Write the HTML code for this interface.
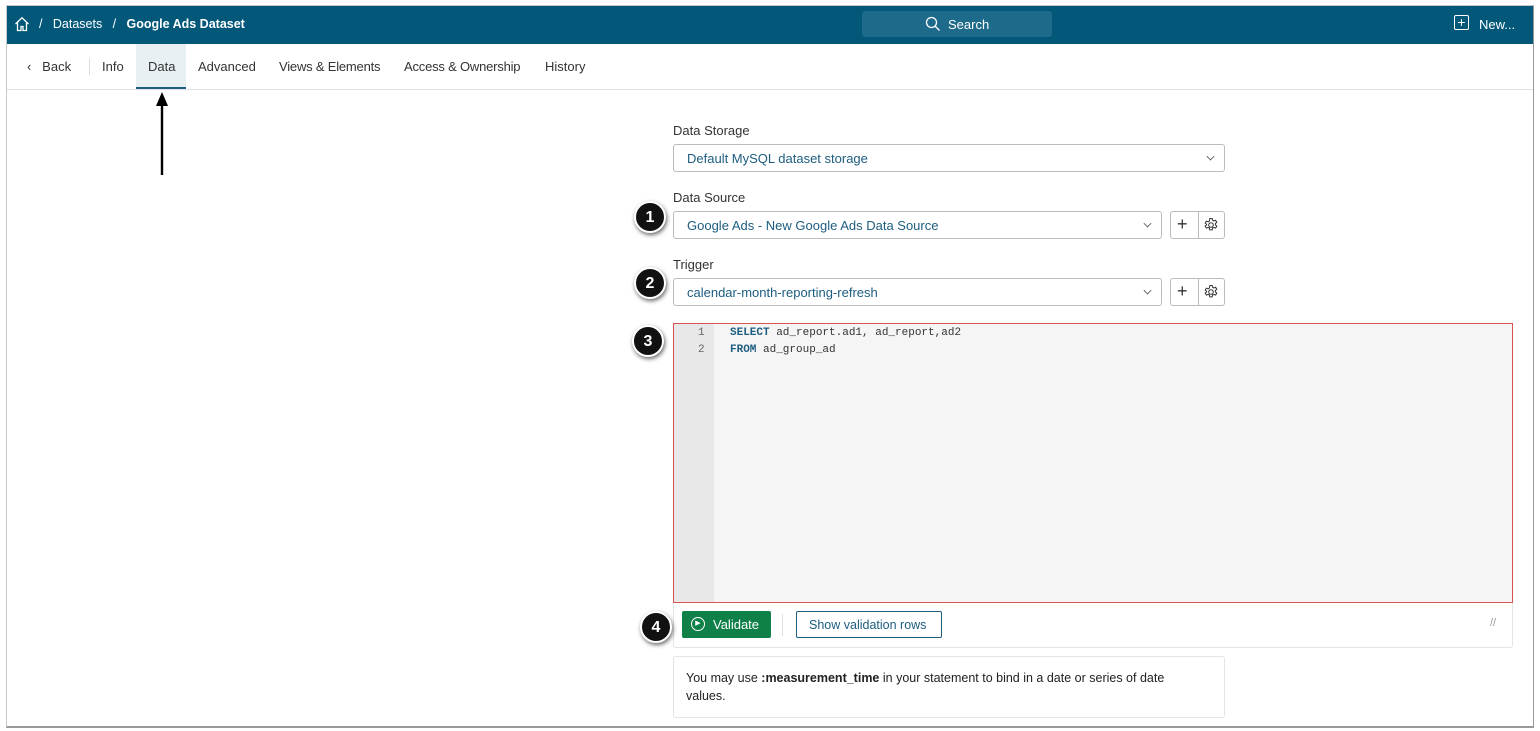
<!DOCTYPE html><html><head><style>
*{box-sizing:border-box;margin:0;padding:0}
body{width:1540px;height:731px;background:#fff;font-family:"Liberation Sans",sans-serif;position:relative;overflow:hidden;font-size:13px;color:#222}
.frame{position:absolute;left:6px;top:5px;width:1528px;height:723px;border:1px solid #c8c8c8;border-right:1px solid #999;border-bottom:2px solid #999}
.hdr{position:absolute;left:7px;top:6px;width:1526px;height:38px;background:#03587a;color:#fff}
.a{position:absolute}
.tab{position:absolute;top:59px;font-size:13px;color:#333}
.lbl{position:absolute;left:673px;font-size:13px;color:#333}
.sel{position:absolute;left:673px;width:489px;height:28px;border:1px solid #bbb;border-radius:3px;color:#1d5d80;font-size:13px;padding:6px 13px}
.chev{position:absolute;right:10px;top:8px;width:7px;height:7px;border-right:1.3px solid #555;border-bottom:1.3px solid #555;transform:rotate(45deg) scale(.8)}
.btns{position:absolute;left:1170px;width:55px;height:28px;border:1px solid #bbb;border-radius:3px}
.btns i{position:absolute;left:27px;top:0;width:1px;height:26px;background:#bbb}
.num{position:absolute;width:32px;height:32px;border-radius:50%;background:#111;color:#fff;font-weight:bold;font-size:16px;text-align:center;line-height:29px;border:2px solid #fff;box-shadow:1px 2px 4px rgba(0,0,0,.6)}
.mono{font-family:"Liberation Mono",monospace;font-size:11px}
</style></head><body>
<div class="frame"></div>
<div class="hdr">
<svg class="a" style="left:7px;top:10px" width="16" height="16" viewBox="0 0 16 16" fill="none" stroke="#fff" stroke-width="1.3"><path d="M1.5 8 8 1.8 14.5 8M3.5 6.5V14.5h3.5v-4h2v4h3.5V6.5"/></svg>
<div class="a" style="left:32px;top:11px;font-size:12.5px">/&nbsp;&nbsp;&nbsp;Datasets&nbsp;&nbsp;&nbsp;/&nbsp;&nbsp;&nbsp;<b>Google Ads Dataset</b></div>
<div class="a" style="left:855px;top:5px;width:190px;height:26px;background:#1d6a8a;border-radius:3px"></div>
<svg class="a" style="left:918px;top:10px" width="16" height="16" viewBox="0 0 16 16" fill="none" stroke="#fff" stroke-width="1.3"><circle cx="6.5" cy="6.5" r="5"/><path d="M10 10l4.5 4.5"/></svg>
<div class="a" style="left:941px;top:11px;font-size:13px">Search</div>
<div class="a" style="left:1447px;top:9px;width:15px;height:15px;border:1.2px solid #fff;border-radius:2px;text-align:center;line-height:12px;font-size:14px">+</div>
<div class="a" style="left:1472px;top:11px;font-size:13px">New...</div>
</div>
<div class="a" style="left:136px;top:44px;width:50px;height:45px;background:#e8f0f4;border-bottom:2px solid #1d5d80"></div>
<div class="a" style="left:7px;top:89px;width:1526px;height:1px;background:#e2e2e2"></div>
<div class="a" style="left:89px;top:58px;width:1px;height:17px;background:#ddd"></div>
<div class="tab" style="left:27px">&lsaquo;&nbsp;&nbsp;&nbsp;Back</div>
<div class="tab" style="left:102px">Info</div>
<div class="tab" style="left:148px">Data</div>
<div class="tab" style="left:198px">Advanced</div>
<div class="tab" style="left:279px;letter-spacing:-.2px">Views &amp; Elements</div>
<div class="tab" style="left:404px;letter-spacing:-.2px">Access &amp; Ownership</div>
<div class="tab" style="left:545px">History</div>
<svg class="a" style="left:152px;top:88px" width="20" height="90"><path d="M10 4 L4 18 H16Z" fill="#000"/><path d="M10 16V87" stroke="#000" stroke-width="2.4"/></svg>
<div class="lbl" style="top:123px">Data Storage</div>
<div class="sel" style="top:144px;width:552px">Default MySQL dataset storage<span class="chev"></span></div>
<div class="lbl" style="top:190px">Data Source</div>
<div class="sel" style="top:211px">Google Ads - New Google Ads Data Source<span class="chev"></span></div>
<div class="btns" style="top:211px"><i></i><span class="a" style="left:6px;top:2px;font-size:18px;color:#333">+</span><svg class="a" style="left:32px;top:5px" width="16" height="16" viewBox="0 0 16 16" fill="none" stroke="#333" stroke-width="1"><circle cx="8" cy="8" r="2.3"/><path d="M6.8 1.5h2.4l.4 1.8 1.3.7 1.7-.7 1.2 2-1.4 1.2v1.4l1.4 1.2-1.2 2-1.7-.7-1.3.7-.4 1.8H6.8l-.4-1.8-1.3-.7-1.7.7-1.2-2 1.4-1.2V7.3L2.2 6.1l1.2-2 1.7.7 1.3-.7z"/></svg></div>
<div class="lbl" style="top:257px">Trigger</div>
<div class="sel" style="top:278px">calendar-month-reporting-refresh<span class="chev"></span></div>
<div class="btns" style="top:278px"><i></i><span class="a" style="left:6px;top:2px;font-size:18px;color:#333">+</span><svg class="a" style="left:32px;top:5px" width="16" height="16" viewBox="0 0 16 16" fill="none" stroke="#333" stroke-width="1"><circle cx="8" cy="8" r="2.3"/><path d="M6.8 1.5h2.4l.4 1.8 1.3.7 1.7-.7 1.2 2-1.4 1.2v1.4l1.4 1.2-1.2 2-1.7-.7-1.3.7-.4 1.8H6.8l-.4-1.8-1.3-.7-1.7.7-1.2-2 1.4-1.2V7.3L2.2 6.1l1.2-2 1.7.7 1.3-.7z"/></svg></div>
<div class="a" style="left:673px;top:323px;width:840px;height:325px;border:1px solid #e4e4e4;border-radius:3px"></div>
<div class="a" style="left:673px;top:323px;width:840px;height:280px;background:#f5f5f5;border:1px solid #d9534f"></div>
<div class="a" style="left:674px;top:324px;width:40px;height:278px;background:#e8e8e8"></div>
<div class="a mono" style="left:698px;top:325px;color:#666;line-height:17px">1<br>2</div>
<div class="a mono" style="left:730px;top:325px;line-height:17px;color:#333"><b style="color:#1d5d80">SELECT</b> ad_report.ad1, ad_report,ad2<br><b style="color:#1d5d80">FROM</b> ad_group_ad</div>
<div class="a" style="left:682px;top:611px;width:89px;height:27px;background:#0f8048;border-radius:2px;color:#fff;font-size:13px"><span class="a" style="left:9px;top:6px;width:14px;height:14px;border:1.2px solid #fff;border-radius:50%;font-size:7px;text-align:center;line-height:12px">▶</span><span class="a" style="left:31px;top:6px">Validate</span></div>
<div class="a" style="left:782px;top:614px;width:1px;height:22px;background:#e0e0e0"></div>
<div class="a" style="left:796px;top:611px;width:146px;height:27px;border:1px solid #1d5d80;border-radius:2px;color:#1d5d80;font-size:12.5px;padding:6px 12px">Show validation rows</div>
<div class="a" style="left:1490px;top:617px;color:#999;font-size:11px">//</div>
<div class="a" style="left:673px;top:656px;width:552px;height:62px;border:1px solid #e4e4e4;border-radius:3px;font-size:12.5px;padding:12px 50px 12px 12px;line-height:18px">You may use <b>:measurement_time</b> in your statement to bind in a date or series of date values.</div>
<div class="num" style="left:634px;top:201px">1</div>
<div class="num" style="left:634px;top:267px">2</div>
<div class="num" style="left:632px;top:325px">3</div>
<div class="num" style="left:640px;top:611px">4</div>
</body></html>
